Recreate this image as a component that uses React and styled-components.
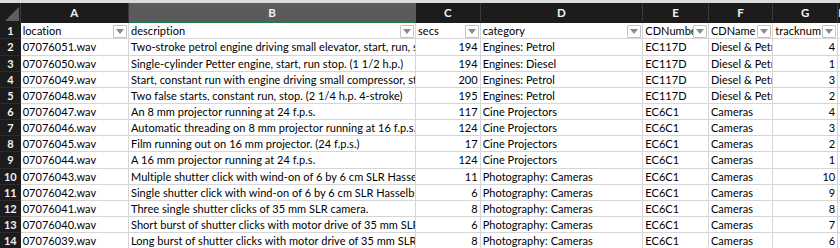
import React from "react";
import styled, { createGlobalStyle } from "styled-components";

const GlobalStyle = createGlobalStyle`
  html, body {
    margin: 0;
    padding: 0;
    background: #ffffff;
    overflow: hidden;
  }
  * { box-sizing: border-box; }
`;

const columns = [
  { key: "A", width: 108.3 },
  { key: "B", width: 287 },
  { key: "C", width: 64.7, align: "right" },
  { key: "D", width: 162.6 },
  { key: "E", width: 65.7 },
  { key: "F", width: 64.3 },
  { key: "G", width: 65, align: "right" },
];

const headers = ["location", "description", "secs", "category", "CDNumber", "CDName", "tracknum"];

const rows = [
  ["07076051.wav", "Two-stroke petrol engine driving small elevator, start, run, stop.", "194", "Engines: Petrol", "EC117D", "Diesel & Petrol Engines", "4"],
  ["07076050.wav", "Single-cylinder Petter engine, start, run stop. (1 1/2 h.p.)", "194", "Engines: Diesel", "EC117D", "Diesel & Petrol Engines", "1"],
  ["07076049.wav", "Start, constant run with engine driving small compressor, stop.", "200", "Engines: Petrol", "EC117D", "Diesel & Petrol Engines", "3"],
  ["07076048.wav", "Two false starts, constant run, stop. (2 1/4 h.p. 4-stroke)", "195", "Engines: Petrol", "EC117D", "Diesel & Petrol Engines", "2"],
  ["07076047.wav", "An 8 mm projector running at 24 f.p.s.", "117", "Cine Projectors", "EC6C1", "Cameras", "4"],
  ["07076046.wav", "Automatic threading on 8 mm projector running at 16 f.p.s.", "124", "Cine Projectors", "EC6C1", "Cameras", "3"],
  ["07076045.wav", "Film running out on 16 mm projector. (24 f.p.s.)", "17", "Cine Projectors", "EC6C1", "Cameras", "2"],
  ["07076044.wav", "A 16 mm projector running at 24 f.p.s.", "124", "Cine Projectors", "EC6C1", "Cameras", "1"],
  ["07076043.wav", "Multiple shutter click with wind-on of 6 by 6 cm SLR Hasselblad camera.", "11", "Photography: Cameras", "EC6C1", "Cameras", "10"],
  ["07076042.wav", "Single shutter click with wind-on of 6 by 6 cm SLR Hasselblad camera.", "6", "Photography: Cameras", "EC6C1", "Cameras", "9"],
  ["07076041.wav", "Three single shutter clicks of 35 mm SLR camera.", "8", "Photography: Cameras", "EC6C1", "Cameras", "8"],
  ["07076040.wav", "Short burst of shutter clicks with motor drive of 35 mm SLR camera.", "6", "Photography: Cameras", "EC6C1", "Cameras", "7"],
  ["07076039.wav", "Long burst of shutter clicks with motor drive of 35 mm SLR camera.", "8", "Photography: Cameras", "EC6C1", "Cameras", "6"],
];

const template = `20.7px ${columns.map((c) => c.width + "px").join(" ")} 1fr`;

const Window = styled.div`
  width: 840px;
  height: 248px;
  overflow: hidden;
  background: #ffffff;
  display: flex;
  flex-direction: column;
  font-family: Lato, "Liberation Sans", sans-serif;
`;

const TopStrip = styled.div`
  height: 2.7px;
  background: #dcdcdc;
  flex-shrink: 0;
`;

const Grid = styled.div`
  display: grid;
  grid-template-columns: ${template};
  grid-template-rows: 20.6px;
  grid-auto-rows: 16.15px;
`;

const Corner = styled.div`
  background: #1c1c1c;
  border-right: 1px solid #3a3a3a;
  display: flex;
  align-items: flex-end;
  justify-content: flex-end;
  padding: 0 1px 2px 0;
`;

const ColHeader = styled.div`
  background: ${(p) => (p.$selected ? "#5b5b5b" : "#1c1c1c")};
  border-right: 1px solid ${(p) => (p.$selected ? "#5b5b5b" : "#3a3a3a")};
  border-bottom: 2px solid ${(p) => (p.$selected ? "#1e7a46" : "#1c1c1c")};
  color: #f2f2f2;
  font-size: 11.5px;
  font-weight: 700;
  display: flex;
  align-items: center;
  justify-content: center;
  padding-top: 1px;
`;

const RowHeader = styled.div`
  background: #1c1c1c;
  border-bottom: 1px solid #2c2c2c;
  color: #f2f2f2;
  font-size: 11px;
  font-weight: 700;
  display: flex;
  align-items: center;
  justify-content: center;
`;

const Cell = styled.div`
  position: relative;
  border-right: 1px solid #d6d6d6;
  border-bottom: 1px solid #d6d6d6;
  color: #000000;
  font-size: 11px;
  letter-spacing: 0.04px;
  white-space: nowrap;
  overflow: hidden;
  display: flex;
  align-items: center;
  justify-content: ${(p) => (p.$align === "right" ? "flex-end" : "flex-start")};
  padding: 0 2px 0 2px;
  line-height: 1;
`;

const FilterButton = styled.span`
  position: absolute;
  right: 1px;
  top: 1.5px;
  width: 14px;
  height: 13.5px;
  background: #ffffff;
  border: 1px solid #c4c4c4;
  border-radius: 1px;
  display: flex;
  align-items: center;
  justify-content: center;
`;

const Triangle = styled.span`
  width: 0;
  height: 0;
  border-left: 4px solid transparent;
  border-right: 4px solid transparent;
  border-top: 5px solid #8a8a8a;
`;

export default function App() {
  return (
    <Window>
      <GlobalStyle />
      <TopStrip />
      <Grid>
        <Corner>
          <svg width="14" height="14" viewBox="0 0 14 14">
            <polygon points="14,0 14,14 0,14" fill="#5e5e5e" />
          </svg>
        </Corner>
        {columns.map((c) => (
          <ColHeader key={c.key} $selected={c.key === "B"}>
            {c.key}
          </ColHeader>
        ))}
        <ColHeader>H</ColHeader>

        <RowHeader>1</RowHeader>
        {headers.map((h) => (
          <Cell key={h}>
            {h}
            <FilterButton>
              <Triangle />
            </FilterButton>
          </Cell>
        ))}
        <Cell />

        {rows.map((r, i) => (
          <React.Fragment key={r[0]}>
            <RowHeader>{i + 2}</RowHeader>
            {r.map((v, j) => (
              <Cell key={j} $align={columns[j].align}>
                {v}
              </Cell>
            ))}
            <Cell />
          </React.Fragment>
        ))}
      </Grid>
    </Window>
  );
}
